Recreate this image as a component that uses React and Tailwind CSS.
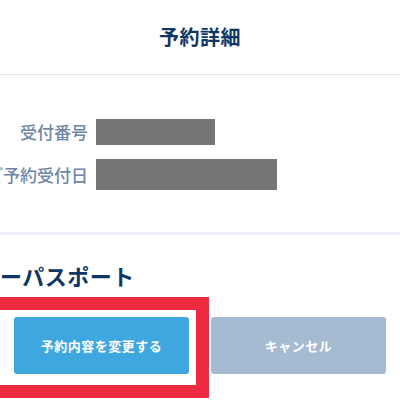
import React from 'react';

const font = { fontFamily: '"Noto Sans CJK JP", "Noto Sans", sans-serif' };

function InfoRow({ label, boxClass }) {
  return (
    <div className="flex items-center">
      <div className="w-[110px] shrink-0 whitespace-nowrap text-right text-[17px] font-medium text-[#6e87a6]">
        {label}
      </div>
      <div className={`ml-[8px] bg-[#767676] ${boxClass}`}></div>
    </div>
  );
}

export default function App() {
  return (
    <div className="w-[400px] h-[400px] overflow-hidden bg-white" style={font}>
      {/* header */}
      <header className="h-[75px] flex items-center justify-center border-b border-[#e6e6e6]">
        <h1 className="text-[20px] font-bold text-[#103663] tracking-[0.5px]">予約詳細</h1>
      </header>

      {/* reservation info */}
      <section className="h-[157px] pt-[44px] ml-[-22px] flex flex-col gap-[14px]">
        <InfoRow label="受付番号" boxClass="w-[119px] h-[26px]" />
        <InfoRow label="ご予約受付日" boxClass="w-[181px] h-[31px]" />
      </section>

      <div className="h-[3px] bg-[#eef2f6]"></div>

      {/* ticket */}
      <h2 className="mt-[24px] text-[22px] font-bold leading-[32px] text-[#103663] tracking-[0.5px]">
        ーパスポート
      </h2>

      <div className="relative mt-[26px] px-[14px] flex gap-[22px]">
        <button className="w-[175px] h-[57px] rounded-[3px] bg-[#3fa7df] text-white text-[13px] font-bold tracking-[0.5px]">
          予約内容を変更する
        </button>
        <button className="w-[175px] h-[57px] rounded-[3px] bg-[#a5bbd1] text-white text-[13px] font-bold tracking-[0.5px]">
          キャンセル
        </button>
        <div className="absolute top-[-20px] left-[-20px] w-[229px] h-[101px] border-[13px] border-[#ec2b40] pointer-events-none"></div>
      </div>
    </div>
  );
}
